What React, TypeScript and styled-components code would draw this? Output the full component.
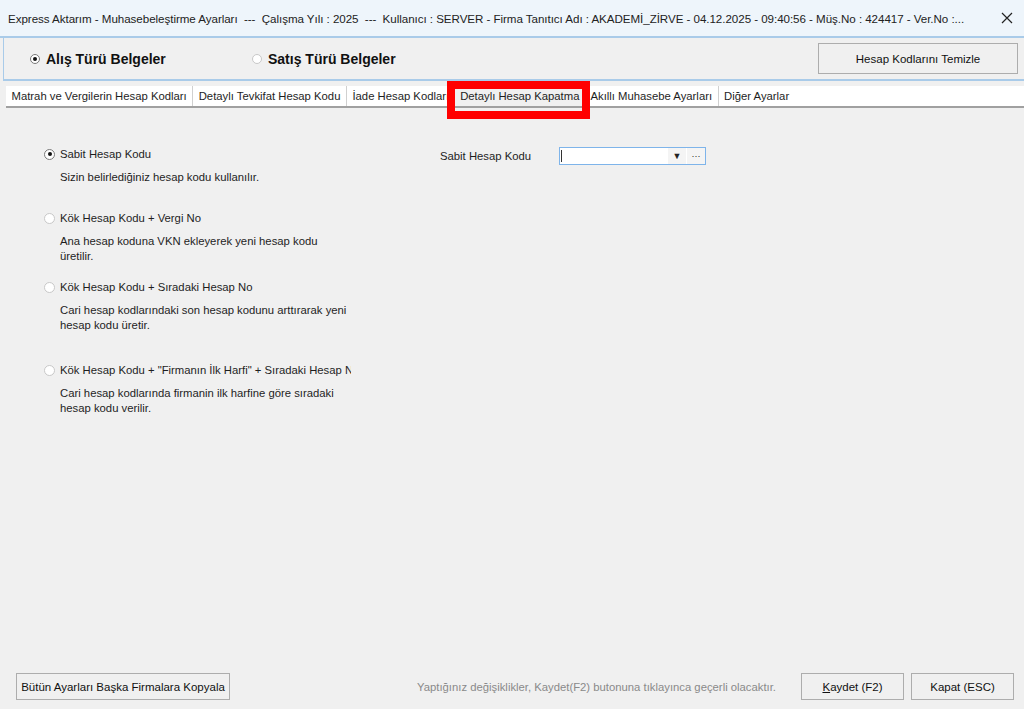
import { createGlobalStyle, styled } from "styled-components"

const GlobalStyle = createGlobalStyle`
  html, body {
    margin: 0;
    padding: 0;
    background: #f0f0f0;
    font-family: "Liberation Sans", Arial, sans-serif;
    font-size: 11px;
    color: #1e1e1e;
  }
`

const Window = styled.div`
  width: 1024px;
  height: 709px;
  display: flex;
  flex-direction: column;
  background: #f0f0f0;
  overflow: hidden;
`

const TitleBar = styled.div`
  height: 36px;
  display: flex;
  align-items: center;
  padding: 0 0 0 8px;
  background: #eef5fb;
  border-bottom: 2px solid #a9cbe9;
  font-size: 11.6px;
  color: #222;
  white-space: nowrap;
`

const TitleText = styled.div`
  flex: 1;
  overflow: hidden;
  letter-spacing: -0.05px;
`

const CloseButton = styled.div`
  width: 34px;
  display: flex;
  justify-content: center;
  align-items: center;
`

const TypePanel = styled.div`
  height: 41px;
  margin-left: 3px;
  display: flex;
  align-items: center;
  padding: 0 6px 0 26px;
  border-left: 1px solid #a9cbe9;
  border-bottom: 2px solid #a9cbe9;
  background: #f0f0f0;
`

const TypeOption = styled.label<{ $width?: number }>`
  display: flex;
  align-items: center;
  gap: 6px;
  width: ${(p) => (p.$width ? `${p.$width}px` : "auto")};
  font-size: 14px;
  font-weight: bold;
  color: #111;
`

const Dot = styled.span<{ $on?: boolean; $size?: number }>`
  width: ${(p) => p.$size ?? 10}px;
  height: ${(p) => p.$size ?? 10}px;
  border-radius: 50%;
  border: 1px solid ${(p) => (p.$on ? "#7a7a7a" : "#c8c8c8")};
  background: #fff;
  box-sizing: border-box;
  display: inline-flex;
  align-items: center;
  justify-content: center;
  flex-shrink: 0;
  &::after {
    content: "";
    width: 4px;
    height: 4px;
    border-radius: 50%;
    background: ${(p) => (p.$on ? "#111" : "transparent")};
  }
`

const Spacer = styled.div`
  flex: 1;
`

const Button = styled.div<{ $w: number; $h?: number }>`
  width: ${(p) => p.$w}px;
  height: ${(p) => p.$h ?? 27}px;
  box-sizing: border-box;
  border: 1px solid #adadad;
  background: #f0f0f0;
  display: flex;
  align-items: center;
  justify-content: center;
  font-size: 11.5px;
  color: #111;
`

const TabStrip = styled.div`
  margin: 5px 0 0 6px;
  height: 20px;
  display: flex;
  align-items: center;
  background: #fff;
  border-bottom: 2px solid #a0a0a0;
  font-size: 11.3px;
  white-space: nowrap;
`

const Tab = styled.div<{ $active?: boolean; $sep?: boolean }>`
  position: relative;
  height: 20px;
  display: flex;
  align-items: center;
  padding: 0 5.5px;
  border-right: ${(p) => (p.$sep ? "1px solid #d0d0d0" : "none")};
  background: ${(p) => (p.$active ? "#f0f0f0" : "transparent")};
  ${(p) =>
    p.$active &&
    `
    &::after {
      content: "";
      position: absolute;
      left: -8px;
      right: -5px;
      top: -5px;
      bottom: -13px;
      border: 8px solid #ff0000;
      box-sizing: border-box;
    }
  `}
`

const Body = styled.div`
  flex: 1;
  display: flex;
  padding: 38px 0 0 44px;
  font-size: 11.3px;
`

const OptionList = styled.div`
  width: 307px;
  display: flex;
  flex-direction: column;
`

const Option = styled.div<{ $gap: number }>`
  margin-bottom: ${(p) => p.$gap}px;
`

const OptionTitle = styled.div`
  display: flex;
  align-items: center;
  gap: 5px;
  height: 16px;
  white-space: nowrap;
  overflow: hidden;
  width: 307px;
`

const OptionText = styled.div`
  margin: 8px 0 0 16px;
  line-height: 15px;
  width: 290px;
`

const FieldRow = styled.div`
  display: flex;
  align-items: center;
  margin: 1px 0 0 89px;
  height: 18px;
`

const FieldLabel = styled.div`
  width: 119px;
`

const Combo = styled.div`
  width: 147px;
  height: 18px;
  box-sizing: border-box;
  border: 1px solid #7eb4ea;
  background: #fff;
  display: flex;
`

const ComboInput = styled.div`
  flex: 1;
  border-left: 1px solid #333;
  margin: 2px 0 2px 1px;
`

const ComboButton = styled.div`
  width: 18px;
  display: flex;
  align-items: center;
  justify-content: center;
  background: #f4f4f4;
  border-left: 1px solid #fff;
  font-size: 9px;
  color: #222;
`

const Footer = styled.div`
  height: 36px;
  display: flex;
  align-items: flex-start;
  padding: 0 10px 0 16px;
`

const Hint = styled.div`
  margin: 8px 25px 0 0;
  color: #8a8a8a;
  font-size: 11.3px;
`

const FooterButtons = styled.div`
  display: flex;
  gap: 7px;
`

const options = [
  {
    title: "Sabit Hesap Kodu",
    text: "Sizin belirlediğiniz hesap kodu kullanılır.",
    on: true,
    gap: 25,
  },
  {
    title: "Kök Hesap Kodu + Vergi No",
    text: "Ana hesap koduna VKN ekleyerek yeni hesap kodu üretilir.",
    gap: 15,
  },
  {
    title: "Kök Hesap Kodu + Sıradaki Hesap No",
    text: "Cari hesap kodlarındaki son hesap kodunu arttırarak yeni hesap kodu üretir.",
    gap: 29,
  },
  {
    title: 'Kök Hesap Kodu + "Firmanın İlk Harfi" + Sıradaki Hesap No',
    text: "Cari hesap kodlarında firmanin ilk harfine göre sıradaki hesap kodu verilir.",
    gap: 0,
  },
]

const tabs = [
  "Matrah ve Vergilerin Hesap Kodları",
  "Detaylı Tevkifat Hesap Kodu",
  "İade Hesap Kodları",
  "Detaylı Hesap Kapatma",
  "Akıllı Muhasebe Ayarları",
  "Diğer Ayarlar",
]

export default function App() {
  return (
    <>
      <GlobalStyle />
      <Window>
        <TitleBar>
          <TitleText>
            Express Aktarım - Muhasebeleştirme Ayarları &nbsp;--- &nbsp;Çalışma Yılı : 2025 &nbsp;--- &nbsp;Kullanıcı : SERVER - Firma Tanıtıcı Adı : AKADEMİ_ZİRVE - 04.12.2025 - 09:40:56 - Müş.No : 424417 - Ver.No :...
          </TitleText>
          <CloseButton>
            <svg width="12" height="12" viewBox="0 0 12 12">
              <path d="M1 1 L11 11 M11 1 L1 11" stroke="#222" strokeWidth="1.2" />
            </svg>
          </CloseButton>
        </TitleBar>

        <TypePanel>
          <TypeOption $width={222}>
            <Dot $on $size={10} />
            Alış Türü Belgeler
          </TypeOption>
          <TypeOption>
            <Dot $size={10} />
            Satış Türü Belgeler
          </TypeOption>
          <Spacer />
          <Button $w={200} $h={31}>Hesap Kodlarını Temizle</Button>
        </TypePanel>

        <TabStrip>
          {tabs.map((t, i) => (
            <Tab key={t} $active={i === 3} $sep={i !== 2 && i !== 3 && i !== 5}>
              {t}
            </Tab>
          ))}
        </TabStrip>

        <Body>
          <OptionList>
            {options.map((o) => (
              <Option key={o.title} $gap={o.gap}>
                <OptionTitle>
                  <Dot $on={o.on} $size={11} />
                  {o.title}
                </OptionTitle>
                <OptionText>{o.text}</OptionText>
              </Option>
            ))}
          </OptionList>
          <FieldRow>
            <FieldLabel>Sabit Hesap Kodu</FieldLabel>
            <Combo>
              <ComboInput />
              <ComboButton>▼</ComboButton>
              <ComboButton>···</ComboButton>
            </Combo>
          </FieldRow>
        </Body>

        <Footer>
          <Button $w={214}>Bütün Ayarları Başka Firmalara Kopyala</Button>
          <Spacer />
          <Hint>Yaptığınız değişiklikler, Kaydet(F2) butonuna tıklayınca geçerli olacaktır.</Hint>
          <FooterButtons>
            <Button $w={103}>
              <u>K</u>aydet (F2)
            </Button>
            <Button $w={103}>Kapat (ESC)</Button>
          </FooterButtons>
        </Footer>
      </Window>
    </>
  )
}
